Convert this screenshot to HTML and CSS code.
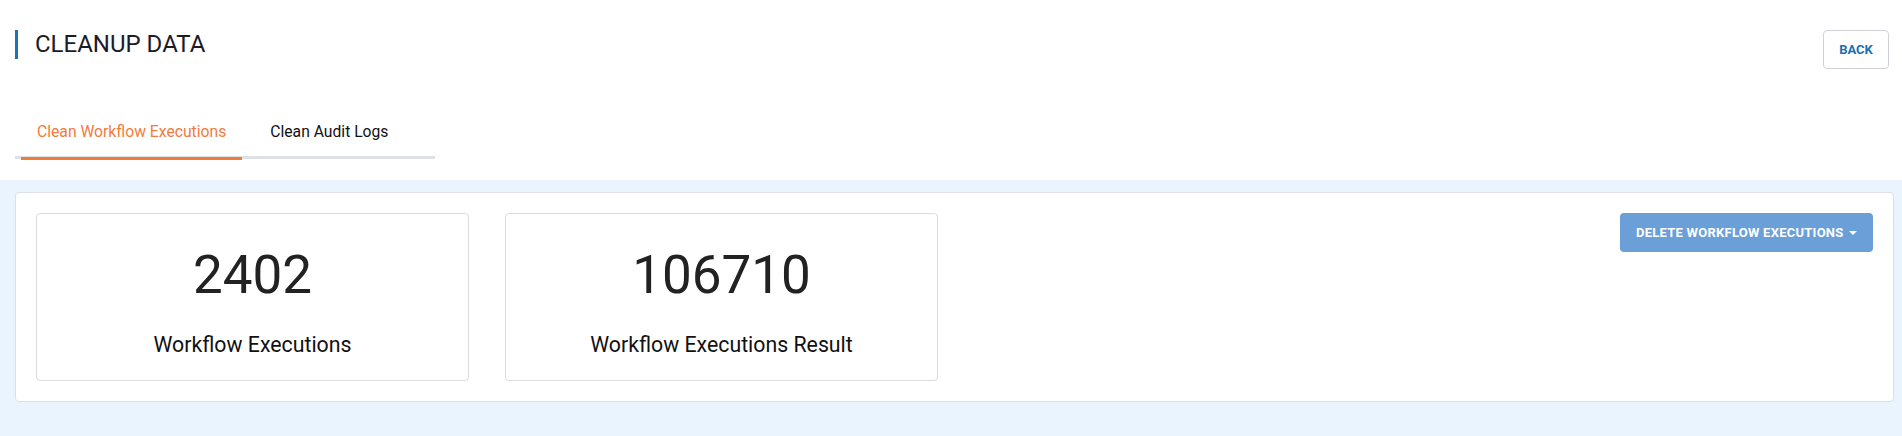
FILE: index.html
```html
<!DOCTYPE html>
<html>
<head>
<meta charset="utf-8">
<link rel="stylesheet" href="styles.css">
</head>
<body>
<div class="top">
  <div class="header">
    <h1 class="title">CLEANUP DATA</h1>
    <button class="back">BACK</button>
  </div>
  <div class="tabs">
    <div class="tab active">Clean Workflow Executions</div>
    <div class="tab">Clean Audit Logs</div>
  </div>
</div>
<div class="content">
  <div class="panel">
    <div class="stat">
      <div class="num">2402</div>
      <div class="label">Workflow Executions</div>
    </div>
    <div class="stat">
      <div class="num">106710</div>
      <div class="label">Workflow Executions Result</div>
    </div>
    <button class="delete">DELETE WORKFLOW EXECUTIONS <span class="caret"></span></button>
  </div>
</div>
</body>
</html>
```
FILE: styles.css
```css
* { box-sizing: border-box; }
html, body { margin: 0; padding: 0; }
body {
  font-family: Roboto, "Liberation Sans", sans-serif;
  background: #eaf4fe;
  height: 436px;
  overflow: hidden;
}
.top {
  background: #fff;
  height: 180px;
  padding: 30px 13px 0 15px;
}
.header {
  display: flex;
  justify-content: space-between;
  align-items: flex-start;
}
.title {
  margin: 0;
  border-left: 3px solid #1a75b5;
  padding-left: 17px;
  font-size: 24px;
  line-height: 29px;
  font-weight: 400;
  color: #1b1b29;
}
.back {
  width: 66px;
  height: 39px;
  background: #fff;
  border: 1px solid #cfd3d8;
  border-radius: 4px;
  color: #1d6fb0;
  font-family: Roboto, "Liberation Sans", sans-serif;
  font-weight: 700;
  font-size: 13px;
  padding: 0;
}
.tabs {
  margin-top: 43px;
  width: 420px;
  display: flex;
  gap: 12px;
  border-bottom: 3px solid #dde0e5;
}
.tab {
  padding: 10px 16px 15px;
  font-size: 15.7px;
  line-height: 20px;
  color: #111;
  margin-bottom: -4px;
  border-bottom: 3px solid transparent;
}
.tab:first-child { margin-left: 6px; }
.tab.active {
  color: #f37b3d;
  border-bottom-color: #f07c3a;
}
.content {
  padding: 12px 8px 0 15px;
}
.panel {
  background: #fff;
  border: 1px solid #dcdfe3;
  border-radius: 4px;
  padding: 20px;
  display: flex;
  gap: 36px;
  align-items: flex-start;
}
.stat {
  width: 433px;
  height: 168px;
  border: 1px solid #dcdcdc;
  border-radius: 4px;
  text-align: center;
  padding-top: 28px;
  color: #1c1c1c;
}
.num {
  font-size: 53px;
  line-height: 66px;
  font-weight: 400;
  color: #222;
}
.label {
  margin-top: 25px;
  font-size: 21.3px;
  line-height: 24px;
  color: #111;
}
.delete {
  margin-left: auto;
  width: 253px;
  height: 39px;
  background: #6a9fd8;
  border: none;
  border-radius: 4px;
  color: #fff;
  font-family: Roboto, "Liberation Sans", sans-serif;
  font-weight: 700;
  font-size: 13px;
  letter-spacing: 0.25px;
  padding: 0 16px;
  display: flex;
  align-items: center;
  justify-content: space-between;
}
.caret {
  width: 0;
  height: 0;
  border-left: 4px solid transparent;
  border-right: 4px solid transparent;
  border-top: 4px solid #fff;
}
```
